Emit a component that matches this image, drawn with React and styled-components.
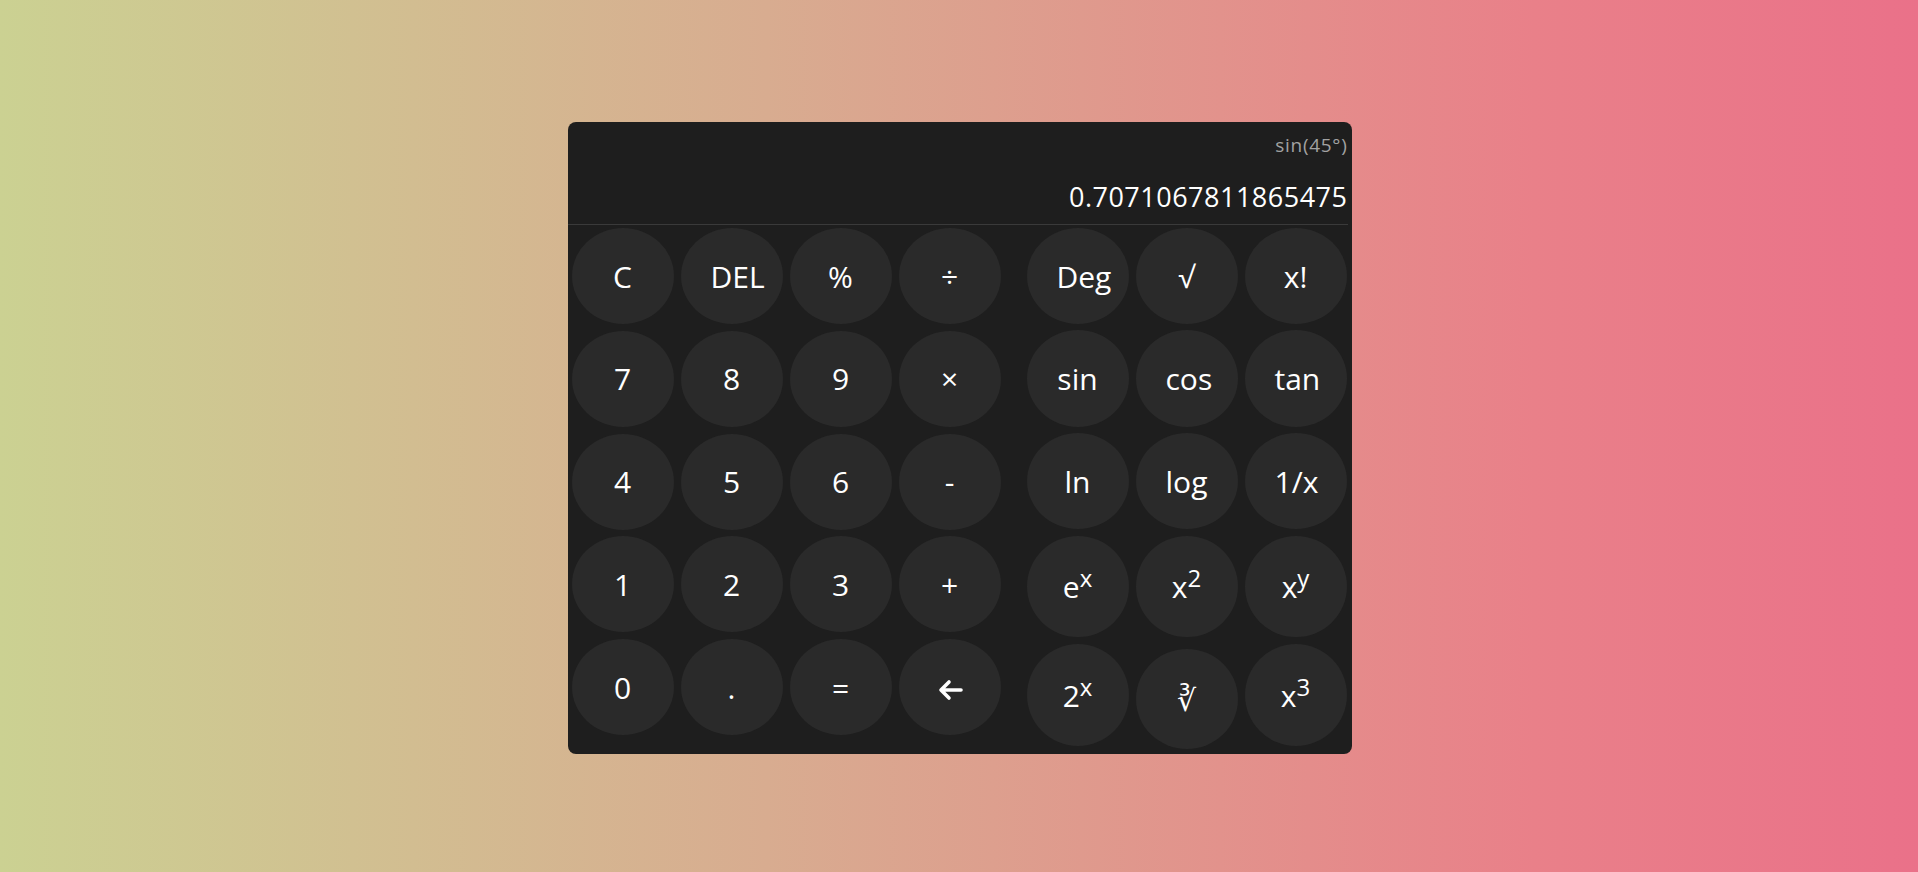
import React from "react";
import styled, { createGlobalStyle } from "styled-components";

const GlobalStyle = createGlobalStyle`
  html, body { margin: 0; padding: 0; }
  body {
    background: linear-gradient(to right, #cbd192, #d8ac90 40%, #e98089 80%, #ea7189);
    font-family: "Open Sans", "Noto Sans", "DejaVu Sans", sans-serif;
    min-height: 100vh;
  }
`;

const Page = styled.div`
  display: flex;
  justify-content: center;
  padding: 122px 0 0 1px;
  min-height: 100vh;
  box-sizing: border-box;
`;

const Calculator = styled.div`
  width: 784px;
  height: 632px;
  background: #1e1e1e;
  border-radius: 8px;
  display: flex;
  flex-direction: column;
  box-sizing: border-box;
`;

const Display = styled.div`
  height: 91px;
  margin-right: 4px;
  border-bottom: 1px solid #3a3a3a;
  display: flex;
  flex-direction: column;
  align-items: flex-end;
  padding-top: 11px;
`;

const Expression = styled.div`
  font-size: 19px;
  line-height: 25px;
  color: #a2a2a2;
  letter-spacing: 0.7px;
`;

const Result = styled.div`
  font-size: 27px;
  line-height: 36px;
  color: #ffffff;
  margin-top: 21px;
  letter-spacing: 0.5px;
`;

const Keypad = styled.div`
  display: flex;
  gap: 26px;
  padding: 3px 5px 0 4px;
`;

const LeftGrid = styled.div`
  display: grid;
  grid-template-columns: repeat(4, 102px);
  grid-auto-rows: 96px;
  column-gap: 7px;
  row-gap: 6.75px;
`;

const RightGrid = styled.div`
  display: grid;
  grid-template-columns: repeat(3, 102px);
  grid-template-rows: 102px 103px 103px 108px 110px;
  column-gap: 7px;
  align-items: start;
`;

const Key = styled.button`
  width: 102px;
  height: ${(p) => p.$h || 96}px;
  margin-top: ${(p) => p.$mt || 0}px;
  padding: 0 30px;
  border: none;
  border-radius: 50%;
  background: #2a2a2a;
  color: #ffffff;
  font-family: "Open Sans", "Noto Sans", "DejaVu Sans", sans-serif;
  font-size: 30px;
  text-align: center;
  white-space: nowrap;
  cursor: pointer;
  box-sizing: border-box;

  sup {
    font-size: 24px;
    line-height: 0;
    vertical-align: super;
  }
`;

const Arrow = () => (
  <svg width="26" height="22" viewBox="0 0 26 22" style={{ verticalAlign: "middle" }}>
    <path
      d="M24 11H5 M12 3L4 11l8 8"
      fill="none"
      stroke="#fff"
      strokeWidth="3.6"
      strokeLinecap="round"
      strokeLinejoin="round"
    />
  </svg>
);

const leftKeys = [
  "C", "DEL", "%", "÷",
  "7", "8", "9", "×",
  "4", "5", "6", "-",
  "1", "2", "3", "+",
  "0", ".", "=", "arrow",
];

const rightKeys = [
  { l: "Deg" }, { l: "√" }, { l: "x!" },
  { l: "sin", h: 97 }, { l: "cos", h: 97 }, { l: "tan", h: 97 },
  { l: "ln" }, { l: "log" }, { l: "1/x" },
  { l: <>e<sup>x</sup></>, h: 101 }, { l: <>x<sup>2</sup></>, h: 101 }, { l: <>x<sup>y</sup></>, h: 101 },
  { l: <>2<sup>x</sup></>, h: 102 }, { l: "∛", h: 100, mt: 5 }, { l: <>x<sup>3</sup></>, h: 102 },
];

export default function App() {
  return (
    <>
      <GlobalStyle />
      <Page>
        <Calculator>
          <Display>
            <Expression>sin(45°)</Expression>
            <Result>0.7071067811865475</Result>
          </Display>
          <Keypad>
            <LeftGrid>
              {leftKeys.map((k, i) => (
                <Key key={i}>{k === "arrow" ? <Arrow /> : k}</Key>
              ))}
            </LeftGrid>
            <RightGrid>
              {rightKeys.map((k, i) => (
                <Key key={i} $h={k.h} $mt={k.mt}>
                  {k.l}
                </Key>
              ))}
            </RightGrid>
          </Keypad>
        </Calculator>
      </Page>
    </>
  );
}
